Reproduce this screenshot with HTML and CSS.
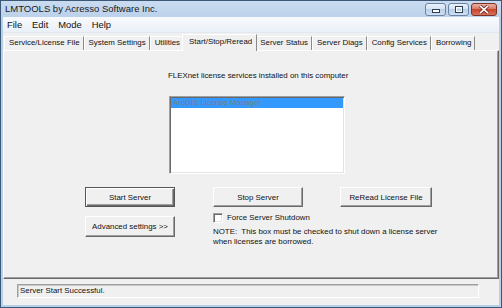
FILE: index.html
```html
<!DOCTYPE html>
<html>
<head>
<meta charset="utf-8">
<link rel="stylesheet" href="styles.css">
</head>
<body>
<div class="window">
  <div class="titlebar">
    <span class="title">LMTOOLS by Acresso Software Inc.</span>
    <div class="winbtns">
      <div class="wb wb-min"><svg width="10" height="6" viewBox="0 0 10 6"><rect x="1.5" y="2.5" width="7" height="3" fill="#fff" stroke="#2d3f55"/></svg></div>
      <div class="wb wb-max"><svg width="10" height="8" viewBox="0 0 10 8"><rect x="1.5" y="0.5" width="7" height="6" fill="none" stroke="#2d3f55"/><rect x="2.5" y="1.5" width="5" height="4" fill="none" stroke="#fff"/></svg></div>
      <div class="wb wb-close"><svg width="12" height="9" viewBox="0 0 12 9"><path d="M2 0.8 L10 8.2 M10 0.8 L2 8.2" stroke="#6b2118" stroke-width="3.2"/><path d="M2 0.8 L10 8.2 M10 0.8 L2 8.2" stroke="#fff" stroke-width="1.6"/></svg></div>
    </div>
  </div>
  <div class="client">
    <div class="menubar">
      <span class="menu-item">File</span>
      <span class="menu-item">Edit</span>
      <span class="menu-item">Mode</span>
      <span class="menu-item">Help</span>
    </div>
    <div class="tabs">
      <div class="tab">Service/License File</div>
      <div class="tab">System Settings</div>
      <div class="tab">Utilities</div>
      <div class="tab tab-active">Start/Stop/Reread</div>
      <div class="tab">Server Status</div>
      <div class="tab">Server Diags</div>
      <div class="tab">Config Services</div>
      <div class="tab">Borrowing</div>
    </div>
    <div class="panel">
      <div class="svc-label">FLEXnet license services installed on this computer</div>
      <div class="listbox">
        <div class="list-item list-item-sel">ArcGIS License Manager</div>
      </div>
      <div class="controls">
        <div class="col-left">
          <button class="btn btn-default">Start Server</button>
          <button class="btn btn-tall">Advanced settings &gt;&gt;</button>
        </div>
        <div class="col-right">
          <div class="btn-row">
            <button class="btn btn-stop">Stop Server</button>
            <button class="btn btn-reread">ReRead License File</button>
          </div>
          <div class="check-row">
            <span class="checkbox"></span>
            <span class="check-label">Force Server Shutdown</span>
          </div>
          <div class="note">NOTE:&nbsp; This box must be checked to shut down a license server<br>when licenses are borrowed.</div>
        </div>
      </div>
    </div>
    <div class="status">Server Start Successful.</div>
  </div>
</div>
</body>
</html>
```
FILE: styles.css
```css
html, body {
  margin: 0;
  padding: 0;
}
body {
  width: 502px;
  height: 308px;
  overflow: hidden;
  font-family: "Liberation Sans", Arial, sans-serif;
  font-size: 7.9px;
  line-height: 10px;
  color: #111;
}
.window {
  box-sizing: border-box;
  width: 502px;
  height: 308px;
  border: 1px solid #3d5875;
  background: #b7d0ea;
  display: flex;
  flex-direction: column;
}
.titlebar {
  height: 16px;
  flex: none;
  display: flex;
  align-items: center;
  padding-left: 4px;
  background: linear-gradient(#c9dbf0, #bcd2eb);
}
.title {
  font-size: 9.5px;
  color: #1a1a1a;
  flex: 1;
}
.winbtns {
  display: flex;
  gap: 2px;
  margin-right: 4px;
  align-self: flex-start;
  margin-top: 2px;
}
.wb {
  box-sizing: border-box;
  width: 21px;
  height: 13px;
  border: 1px solid #6a84a5;
  border-radius: 3px;
  display: flex;
  align-items: center;
  justify-content: center;
  background: linear-gradient(#eaf2fb, #d3e2f3 45%, #b9cfea 50%, #cfe0f3);
}
.wb-close {
  width: 26px;
  border-color: #7b3227;
  background: linear-gradient(#eab0a3, #da7966 45%, #c9452e 50%, #d9715c);
}
.client {
  flex: 1;
  margin: 0 2px 2px;
  background: #f0f0f0;
  display: flex;
  flex-direction: column;
}
.menubar {
  height: 16px;
  flex: none;
  box-sizing: border-box;
  display: flex;
  align-items: center;
  gap: 10px;
  padding-left: 4px;
  font-size: 9.4px;
  background: linear-gradient(#f8fafd, #eaf0f8);
  border-bottom: 1px solid #e2e8f0;
}
.tabs {
  height: 17px;
  flex: none;
  display: flex;
  align-items: flex-end;
  padding-left: 1px;
  position: relative;
  z-index: 1;
}
.tab {
  box-sizing: border-box;
  height: 14px;
  line-height: 12px;
  padding: 0 3px 0 4px;
  border-top: 1px solid #fff;
  border-left: 1px solid #fff;
  border-right: 1px solid #8a8a8a;
  white-space: nowrap;
  background: #f0f0f0;
}
.tab-active {
  height: 17px;
  margin: 0 -2px -1px -2px;
  padding: 0 4px 0 6px;
  line-height: 13px;
  position: relative;
}
.panel {
  box-sizing: border-box;
  height: 229px;
  flex: none;
  border-top: 1px solid #fff;
  border-left: 1px solid #fff;
  border-right: 1px solid #696969;
  border-bottom: 1px solid #696969;
  box-shadow: inset -1px -1px 0 #a0a0a0;
  display: flex;
  flex-direction: column;
  align-items: flex-start;
}
.svc-label {
  margin: 20px 0 0 164px;
}
.listbox {
  box-sizing: border-box;
  width: 176px;
  height: 78px;
  margin: 15px 0 0 165px;
  background: #fff;
  border: 1px solid;
  border-color: #a0a0a0 #fff #fff #a0a0a0;
  box-shadow: inset 1px 1px 0 #696969, inset -1px -1px 0 #e3e3e3;
  padding: 1px 1px 0 1px;
}
.list-item {
  height: 10px;
  line-height: 10px;
  padding-left: 2px;
}
.list-item-sel {
  background: #3399ff;
  color: #7d7d7d;
}
.controls {
  display: flex;
  gap: 38px;
  margin: 13px 0 0 81px;
}
.col-left {
  display: flex;
  flex-direction: column;
  gap: 9px;
}
.btn {
  box-sizing: border-box;
  width: 90px;
  height: 20px;
  margin: 0;
  padding: 0;
  font-family: "Liberation Sans", Arial, sans-serif;
  font-size: 7.9px;
  color: #111;
  background: #f0f0f0;
  border: 1px solid;
  border-color: #fff #696969 #696969 #fff;
  box-shadow: inset -1px -1px 0 #a0a0a0;
  display: flex;
  align-items: center;
  justify-content: center;
}
.btn-default {
  border: 1px solid #555;
  box-shadow: inset 1px 1px 0 #fff, inset -1px -1px 0 #696969, inset -2px -2px 0 #a0a0a0;
}
.btn-tall {
  height: 21px;
}
.btn-reread {
  width: 92px;
}
.col-right {
  display: flex;
  flex-direction: column;
}
.btn-row {
  display: flex;
  gap: 37px;
}
.check-row {
  display: flex;
  align-items: center;
  gap: 4px;
  margin-top: 6px;
  height: 10px;
}
.checkbox {
  box-sizing: border-box;
  width: 10px;
  height: 10px;
  background: #fff;
  border: 1px solid;
  border-color: #a0a0a0 #fff #fff #a0a0a0;
  box-shadow: inset 1px 1px 0 #696969, inset -1px -1px 0 #e3e3e3;
}
.note {
  margin-top: 4px;
}
.status {
  box-sizing: border-box;
  height: 14px;
  margin: 5px 20px 0 14px;
  padding-left: 2px;
  line-height: 12px;
  border: 1px solid;
  border-color: #a0a0a0 #fff #fff #a0a0a0;
  box-shadow: inset 1px 1px 0 #c8c8c8;
}
```
